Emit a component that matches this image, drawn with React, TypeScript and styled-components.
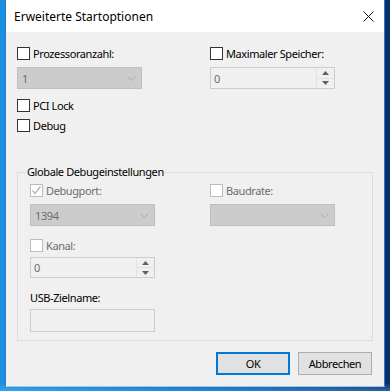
import React from 'react';
import styled, { createGlobalStyle } from 'styled-components';

const Global = createGlobalStyle`
  html, body { margin: 0; padding: 0; }
  body {
    width: 390px;
    height: 391px;
    overflow: hidden;
    font-family: "Noto Sans", "Segoe UI", sans-serif;
    font-size: 11px;
  }
`;

const Desktop = styled.div`
  width: 390px;
  height: 391px;
  box-sizing: border-box;
  padding-left: 5px;
  background:
    linear-gradient(180deg, rgba(255,255,255,0) 0, rgba(255,255,255,0) 383px, rgba(120,200,255,0.35) 391px),
    linear-gradient(90deg, #1a8fe0 0%, #0d6fc4 40%, #0a4f9a 75%, #0a2f66 100%);
`;

const Dialog = styled.div`
  width: 380px;
  height: 387px;
  box-sizing: border-box;
  border: 1px solid #2a7ccb;
  border-top: none;
  border-bottom-color: #9cc9ee;
  background: #f0f0f0;
  display: flex;
  flex-direction: column;
  font-size: 11px;
  letter-spacing: -0.4px;
`;

const TitleBar = styled.div`
  height: 32px;
  flex: none;
  background: #ffffff;
  display: flex;
  align-items: center;
  justify-content: space-between;
  padding: 0 10px 0 8px;
  color: #000;
  font-size: 12px;
  letter-spacing: 0;
`;

const Title = styled.span`
  line-height: 16px;
  margin-top: 1px;
`;

const Body = styled.div`
  flex: 1;
  display: flex;
  flex-direction: column;
  padding: 15px 11px 0 11px;
`;

const TopGrid = styled.div`
  display: grid;
  grid-template-columns: 193px 1fr;
`;

const Column = styled.div`
  display: flex;
  flex-direction: column;
  align-items: flex-start;
`;

const CheckRow = styled.label<{ $disabled?: boolean; $mt?: number }>`
  display: flex;
  align-items: center;
  gap: 3px;
  height: 13px;
  margin-top: ${p => p.$mt ?? 0}px;
  color: ${p => (p.$disabled ? '#6d6d6d' : '#000')};
  line-height: 13px;
  white-space: nowrap;
`;

const Box = styled.span<{ $disabled?: boolean }>`
  width: 13px;
  height: 13px;
  box-sizing: border-box;
  flex: none;
  border: 1px solid ${p => (p.$disabled ? '#bcbcbc' : '#333333')};
  background: #ffffff;
  display: flex;
  align-items: center;
  justify-content: center;
`;

const Combo = styled.div<{ $mt?: number }>`
  width: 125px;
  height: 22px;
  box-sizing: border-box;
  margin-top: ${p => p.$mt ?? 0}px;
  border: 1px solid #bfbfbf;
  background: #cccccc;
  color: #6d6d6d;
  display: flex;
  align-items: center;
  justify-content: space-between;
  padding: 0 5px 0 4px;
`;

const Spin = styled.div<{ $mt?: number; $h?: number }>`
  width: 125px;
  height: ${p => p.$h ?? 22}px;
  box-sizing: border-box;
  margin-top: ${p => p.$mt ?? 0}px;
  border: 1px solid #cccccc;
  background: #f0f0f0;
  color: #6d6d6d;
  display: flex;
  align-items: stretch;
`;

const SpinValue = styled.span`
  flex: 1;
  display: flex;
  align-items: center;
  padding-left: 3px;
`;

const SpinButtons = styled.div`
  width: 17px;
  display: flex;
  flex-direction: column;
  border-left: 1px solid #e3e3e3;
`;

const SpinBtn = styled.div`
  flex: 1;
  display: flex;
  align-items: center;
  justify-content: center;
  background: #f0f0f0;
  & + & { border-top: 1px solid #e3e3e3; }
`;

const Group = styled.div`
  position: relative;
  margin-top: 40px;
  width: 356px;
  height: 169px;
  box-sizing: border-box;
  border: 1px solid #dcdcdc;
  padding: 11px 12px 0 12px;
  display: grid;
  grid-template-columns: 180px 1fr;
  align-content: start;
`;

const Legend = styled.span`
  position: absolute;
  left: 8px;
  top: -9px;
  padding: 0 1px;
  background: #f0f0f0;
  color: #000;
  line-height: 16px;
`;

const Cell = styled.div`
  display: flex;
  flex-direction: column;
  align-items: flex-start;
`;

const FieldLabel = styled.span<{ $mt?: number }>`
  margin-top: ${p => p.$mt ?? 0}px;
  line-height: 16px;
  color: #000;
`;

const TextBox = styled.div<{ $mt?: number }>`
  width: 125px;
  height: 23px;
  box-sizing: border-box;
  margin-top: ${p => p.$mt ?? 0}px;
  border: 1px solid #cccccc;
  background: #f0f0f0;
`;

const ButtonRow = styled.div`
  display: flex;
  justify-content: flex-end;
  gap: 8px;
  margin-top: 11px;
  padding-right: 1px;
`;

const Button = styled.button<{ $default?: boolean }>`
  width: 74px;
  height: 23px;
  box-sizing: border-box;
  padding: 0;
  margin: 0;
  border: ${p => (p.$default ? '2px solid #0078d7' : '1px solid #adadad')};
  background: #e1e1e1;
  color: #000;
  font-family: inherit;
  font-size: 11px;
  letter-spacing: -0.4px;
  line-height: 16px;
`;

const Chevron = () => (
  <svg width="9" height="5" viewBox="0 0 9 5">
    <polyline points="0.5,0.5 4.5,4.5 8.5,0.5" fill="none" stroke="#a8a8a8" strokeWidth="1" />
  </svg>
);

const Check = () => (
  <svg width="11" height="11" viewBox="0 0 11 11">
    <polyline points="1.5,5.5 4,8.5 9.5,1.5" fill="none" stroke="#b4b4b4" strokeWidth="1.3" />
  </svg>
);

const Up = () => (
  <svg width="7" height="4" viewBox="0 0 7 4">
    <polygon points="0,4 7,4 3.5,0" fill="#606060" />
  </svg>
);

const Down = () => (
  <svg width="7" height="4" viewBox="0 0 7 4">
    <polygon points="0,0 7,0 3.5,4" fill="#606060" />
  </svg>
);

const CloseIcon = () => (
  <svg width="11" height="11" viewBox="0 0 11 11">
    <path d="M0.5 0.5 L10.5 10.5 M10.5 0.5 L0.5 10.5" stroke="#111" strokeWidth="1" fill="none" />
  </svg>
);

const SpinField = ({ value, mt, h }: { value: string; mt?: number; h?: number }) => (
  <Spin $mt={mt} $h={h}>
    <SpinValue>{value}</SpinValue>
    <SpinButtons>
      <SpinBtn><Up /></SpinBtn>
      <SpinBtn><Down /></SpinBtn>
    </SpinButtons>
  </Spin>
);

export default function App() {
  return (
    <>
      <Global />
      <Desktop>
        <Dialog>
          <TitleBar>
            <Title>Erweiterte Startoptionen</Title>
            <CloseIcon />
          </TitleBar>
          <Body>
            <TopGrid>
              <Column>
                <CheckRow><Box />Prozessoranzahl:</CheckRow>
                <Combo $mt={7}><span>1</span><Chevron /></Combo>
                <CheckRow $mt={10}><Box />PCI Lock</CheckRow>
                <CheckRow $mt={7}><Box />Debug</CheckRow>
              </Column>
              <Column>
                <CheckRow><Box />Maximaler Speicher:</CheckRow>
                <SpinField value="0" mt={7} />
              </Column>
            </TopGrid>
            <Group>
              <Legend>Globale Debugeinstellungen</Legend>
              <Cell>
                <CheckRow $disabled><Box $disabled><Check /></Box>Debugport:</CheckRow>
                <Combo $mt={7}><span>1394</span><Chevron /></Combo>
                <CheckRow $disabled $mt={13}><Box $disabled />Kanal:</CheckRow>
                <SpinField value="0" mt={5} h={21} />
                <FieldLabel $mt={12}>USB-Zielname:</FieldLabel>
                <TextBox $mt={3} />
              </Cell>
              <Cell>
                <CheckRow $disabled><Box $disabled />Baudrate:</CheckRow>
                <Combo $mt={7}><span></span><Chevron /></Combo>
              </Cell>
            </Group>
            <ButtonRow>
              <Button $default>OK</Button>
              <Button>Abbrechen</Button>
            </ButtonRow>
          </Body>
        </Dialog>
      </Desktop>
    </>
  );
}
